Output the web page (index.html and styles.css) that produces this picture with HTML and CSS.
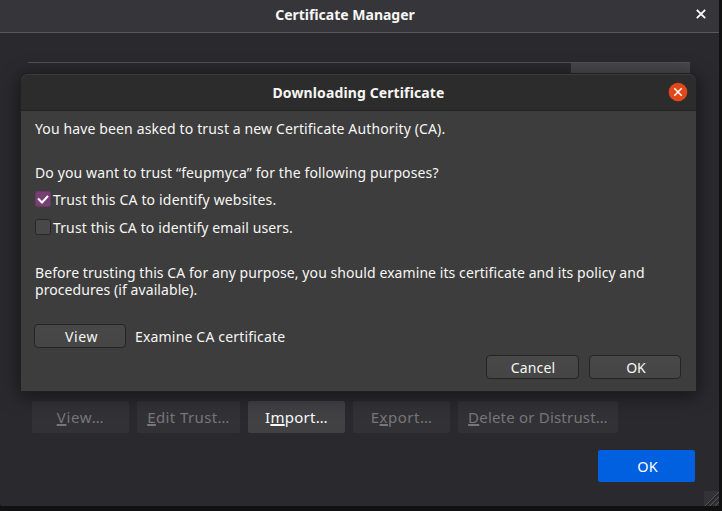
FILE: index.html
```html
<!DOCTYPE html>
<html lang="en">
<head>
<meta charset="utf-8">
<title>Certificate Manager</title>
<link rel="stylesheet" href="styles.css">
</head>
<body>
<main class="manager">
  <header class="manager-bar">
    <h1 class="manager-title">Certificate Manager</h1>
    <svg class="manager-close" width="10" height="10" viewBox="0 0 10 10"><path d="M.8.8 9.2 9.2M9.2.8.8 9.2"/></svg>
  </header>
  <div class="manager-list"><div class="column-picker"></div></div>
  <div class="actions">
    <button class="action inspect" disabled><u>V</u>iew…</button>
    <button class="action edit" disabled><u>E</u>dit Trust…</button>
    <button class="action enabled">I<u>m</u>port…</button>
    <button class="action export" disabled>E<u>x</u>port…</button>
    <button class="action delete" disabled><u>D</u>elete or Distrust…</button>
  </div>
  <footer class="manager-footer"><button class="accept">OK</button></footer>
  <svg class="resizer" width="15" height="15" viewBox="0 0 15 15"><rect width="15" height="15" fill="#333335"/><path d="M1 15 15 1M6 15 15 6M11 15l4-4" stroke="#555557"/><path d="M2.5 15 15 2.5M7.5 15 15 7.5M12.5 15l2.500-2.500" stroke="#202022"/></svg>
</main>
<section class="dialog" role="dialog">
  <header class="dialog-bar">
    <h2 class="dialog-title">Downloading Certificate</h2>
    <svg class="dialog-close" width="20" height="20" viewBox="0 0 20 20"><circle cx="10" cy="10" r="9.300"/><path d="m6.300 6.300 7.400 7.400m0-7.400-7.400 7.400"/></svg>
  </header>
  <div class="dialog-body">
    <p class="intro">You have been asked to trust a new Certificate Authority (CA).</p>
    <p class="question">Do you want to trust “feupmyca” for the following purposes?</p>
    <div class="option websites"><svg class="check checked" width="16" height="16" viewBox="0 0 16 16"><rect x=".5" y=".5" width="15" height="15" rx="2"/><path d="m3 7.500 4 4 6-6.500"/></svg><span>Trust this CA to identify websites.</span></div>
    <div class="option email"><svg class="check" width="16" height="16" viewBox="0 0 16 16"><rect x=".5" y=".5" width="15" height="15" rx="2"/></svg><span>Trust this CA to identify email users.</span></div>
    <p class="advice">Before trusting this CA for any purpose, you should examine its certificate and its policy and<br>procedures (if available).</p>
    <div class="examine"><button class="gtk view">View</button><span class="examine-label">Examine CA certificate</span></div>
    <div class="dialog-actions"><button class="gtk cancel">Cancel</button><button class="gtk ok">OK</button></div>
  </div>
</section>
</body>
</html>
```

FILE: styles.css
```css
* { box-sizing: border-box; }
body {
  margin: 0;
  height: 511px;
  overflow: hidden;
  background: #111112;
  color: #f6f6f4;
  font: 14px/17px "Noto Sans", sans-serif;
  white-space: nowrap;
}
h1, h2, p { margin: 0; font-size: 14px; line-height: 17px; }
h1, h2 { font-weight: 700; }
button { font: inherit; color: inherit; padding: 0; border: 0; white-space: nowrap; }

.manager {
  position: relative;
  width: 719px;
  height: 506px;
  background: #2a292e;
  border-radius: 0 0 2px 2px;
}
.manager-bar {
  height: 33px;
  display: grid;
  grid-template-columns: 28px 1fr 28px;
  padding: 6px 0 0;
  margin-bottom: 29px;
  background: #363539;
  border-bottom: 1px solid #59585c;
}
.manager-title { grid-column: 2; text-align: center; padding-right: 29px; }
.manager-close { margin: 3px 0 0 5px; fill: none; stroke: #fff; stroke-width: 1.8; }
.manager-list {
  width: 662px;
  height: 320px;
  margin-left: 28px;
  border-top: 1px solid #525156;
}
.column-picker { width: 119px; height: 24px; margin-left: auto; background: #48474c; }
.actions { display: flex; gap: 8px; margin: 19px 0 0 32px; }
.action {
  width: 97px;
  height: 32px;
  border-radius: 2px;
  background: #323135;
  color: #77767a;
  font-size: 15px;
  letter-spacing: .3px;
}
.action.enabled { background: #414144; color: #f9f9fa; }
.inspect { letter-spacing: .7px; }
.edit { width: 103px; letter-spacing: .4px; }
.export { letter-spacing: .5px; }
.delete { width: 160px; letter-spacing: .2px; }
.action u { text-decoration-thickness: 2px; text-underline-offset: 1px; text-decoration-skip-ink: none; }
.manager-footer { display: flex; justify-content: flex-end; padding: 17px 24px 0 0; }
.accept { width: 97px; height: 32px; padding-left: 2px; border-radius: 2px; background: #0060df; color: #fff; font-size: 14.5px; }
.resizer { position: absolute; right: 0; bottom: 0; }

/* The modal lies over the manager window */
.dialog {
  position: absolute;
  left: 21px;
  top: 74px;
  width: 675px;
  height: 317px;
  border-radius: 7px 7px 0 0;
  background: #3d3d3d;
  box-shadow: 0 0 0 1px #202020, 0 3px 18px 2px rgba(0, 0, 0, .5);
}
.dialog-bar {
  height: 37px;
  display: grid;
  grid-template-columns: 28px 1fr 28px;
  padding-top: 9px;
  background: #2c2c2c;
  border-radius: 7px 7px 0 0;
  border-bottom: 1px solid #232323;
  box-shadow: inset 0 1px #3a3a3a;
}
.dialog-title { grid-column: 2; padding-top: 1px; text-align: center; letter-spacing: .12px; }
.dialog-close { margin-top: -1px; fill: #e2491a; }
.dialog-close path { fill: none; stroke: #fff; stroke-width: 1.5; }
.dialog-body { padding: 9px 14px 0; }
.intro { letter-spacing: .13px; }
.question { margin-top: 27px; letter-spacing: .12px; }
.option { display: flex; gap: 2px; height: 17px; margin-top: 10px; }
.option + .option { margin-top: 11px; }
.websites { letter-spacing: .17px; }
.email { letter-spacing: .12px; }
.check { fill: #484848; stroke: #272727; }
.checked { fill: #773f72; stroke: #693864; }
.checked path { fill: none; stroke: #fff; stroke-width: 2; }
.advice { margin-top: 28px; letter-spacing: .075px; }
.examine { display: flex; align-items: center; gap: 9px; margin: 26px 0 0 -1px; }
.examine-label { letter-spacing: .18px; }
.gtk {
  width: 92px;
  height: 24px;
  border: 1px solid #242424;
  border-radius: 4px;
  background: linear-gradient(#484848, #454545);
}
.view { padding-left: 3px; letter-spacing: .6px; }
.dialog-actions { display: flex; justify-content: flex-end; gap: 10px; margin: 7px 1px 0 0; }
.cancel { width: 93px; padding-left: 1px; letter-spacing: .15px; }
.ok { padding-left: 2px; }
```
